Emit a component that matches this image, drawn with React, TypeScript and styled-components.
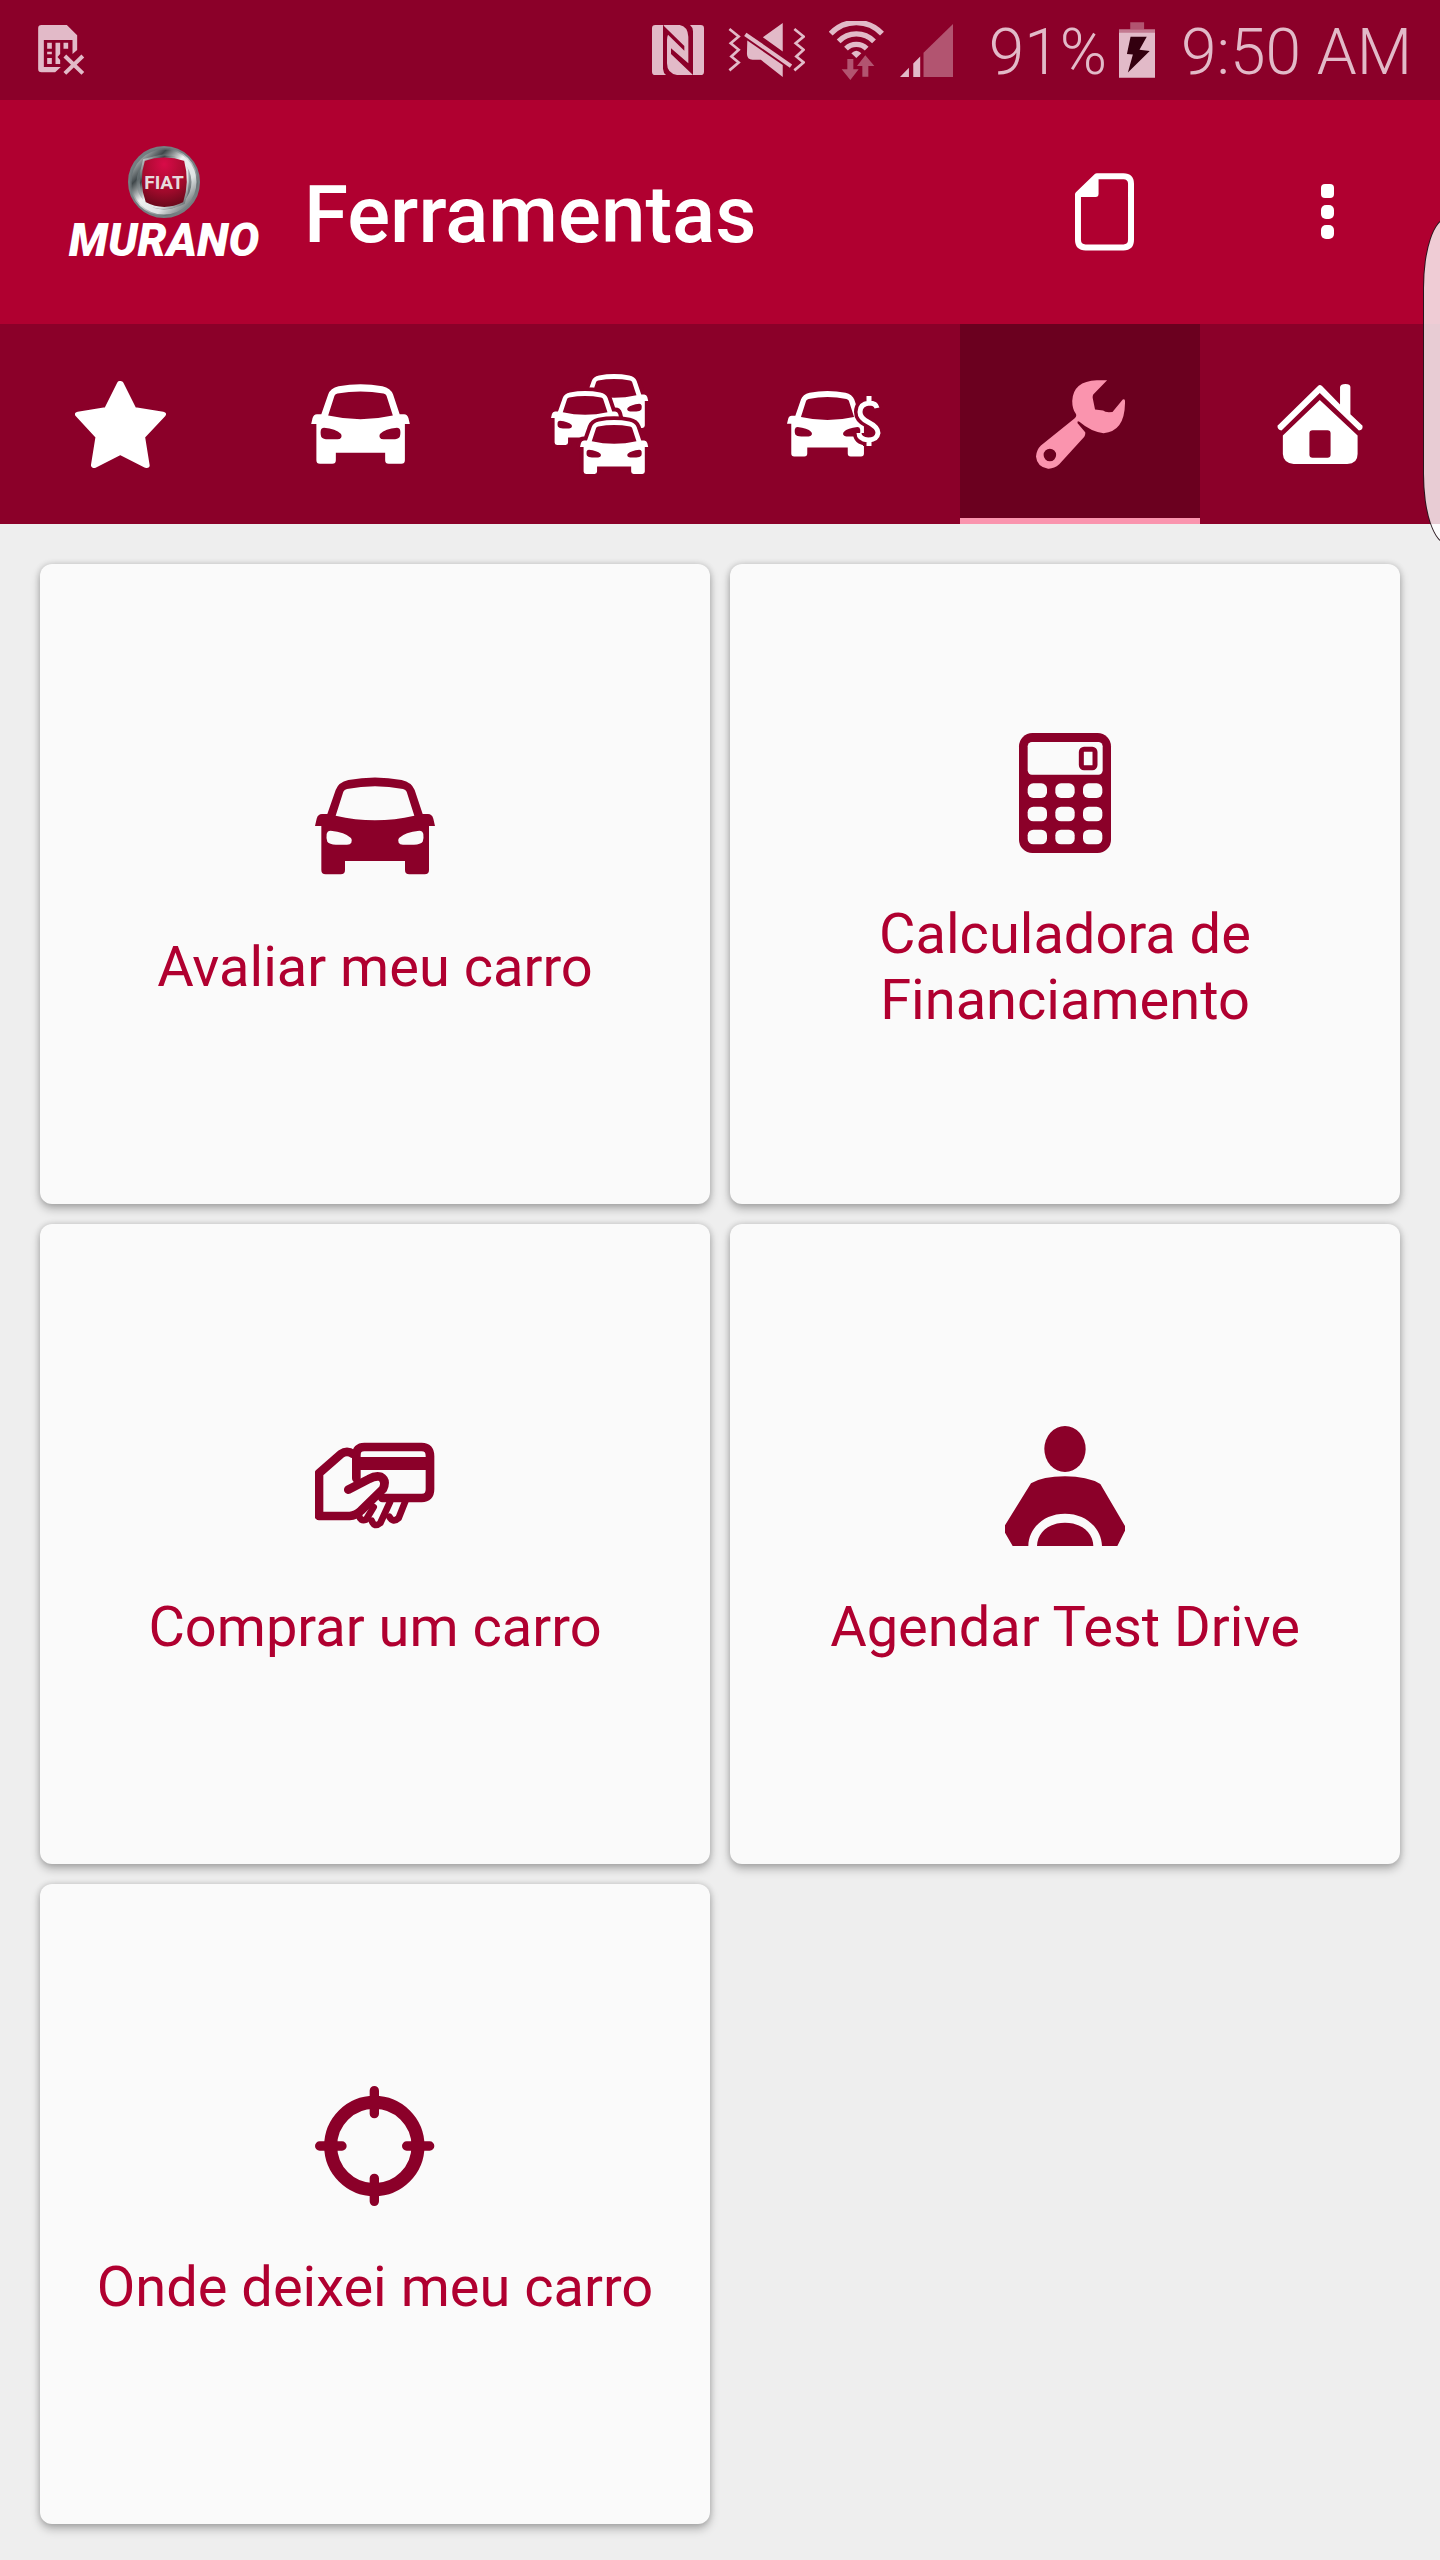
import React from "react";
import styled, { createGlobalStyle } from "styled-components";

const color = {
  dark: "#8b0029",
  darker: "#6b001f",
  primary: "#b00030",
  accent: "#fa94ae",
  page: "#eeeeee",
  card: "#fafafa",
  status: "#e2bac8",
};

const GlobalStyle = createGlobalStyle`
  * { box-sizing: border-box; }
  body { margin: 0; background: ${color.page}; font-family: Roboto, "Noto Sans", sans-serif; }
  button { font: inherit; border: 0; padding: 0; margin: 0; background: none; cursor: pointer; }
  svg { display: block; flex: none; }
`;

const Screen = styled.div`
  position: relative;
  min-height: 100vh;
  overflow: hidden;
  background: ${color.page};
`;

const StatusBar = styled.div`
  display: flex;
  align-items: center;
  justify-content: space-between;
  height: 100px;
  padding: 0 28px 0 38px;
  background: ${color.dark};
  color: ${color.status};
  font-size: 64px;
  font-weight: 350;
  line-height: 100px;
  white-space: nowrap;
`;

const StatusGroup = styled.div<{ $gap: number }>`
  display: flex;
  align-items: center;
  gap: ${(p) => p.$gap}px;
`;

const StatusText = styled.span`
  padding-top: 6px;
`;

const AppBar = styled.header`
  display: flex;
  align-items: center;
  height: 224px;
  padding: 0 48px 0 68px;
  background: ${color.primary};
  color: #fff;
`;

const Brand = styled.div`
  display: flex;
  flex-direction: column;
  align-items: center;
  gap: 2px;
  width: 192px;
  padding-bottom: 18px;
`;

const BrandName = styled.span`
  font-size: 46px;
  font-weight: 900;
  font-style: italic;
  line-height: 40px;
`;

const Title = styled.h1`
  flex: 1;
  margin: 0;
  padding: 6px 0 0 44px;
  font-size: 80px;
  font-weight: 500;
  line-height: 96px;
`;

const Actions = styled.div`
  display: flex;
  gap: 80px;
`;

const IconButton = styled.button<{ $width: number }>`
  display: flex;
  align-items: center;
  justify-content: center;
  width: ${(p) => p.$width}px;
  height: 128px;
  color: #fff;
`;

const Tabs = styled.nav`
  display: flex;
  height: 200px;
  background: ${color.dark};
`;

const Tab = styled.button<{ $active?: boolean }>`
  flex: 1;
  display: flex;
  align-items: center;
  justify-content: center;
  color: ${(p) => (p.$active ? color.accent : "#fff")};
  background: ${(p) => (p.$active ? color.darker : "transparent")};
  box-shadow: ${(p) => (p.$active ? `inset 0 -6px 0 ${color.accent}` : "none")};
`;

const Grid = styled.main`
  display: grid;
  grid-template-columns: 1fr 1fr;
  gap: 20px;
  padding: 40px 40px 36px;
`;

const Card = styled.button`
  display: flex;
  flex-direction: column;
  align-items: center;
  justify-content: center;
  gap: 48px;
  min-height: 640px;
  padding: 0 40px 2px;
  border-radius: 12px;
  background: ${color.card};
  box-shadow: 0 5px 10px rgba(0, 0, 0, 0.26), 0 0 6px rgba(0, 0, 0, 0.16);
  color: ${color.dark};
`;

const CardLabel = styled.span`
  color: ${color.primary};
  font-size: 56px;
  line-height: 66px;
  text-align: center;
`;

const EdgeHandle = styled.div`
  position: absolute;
  top: 218px;
  right: -31px;
  width: 48px;
  height: 326px;
  border: 1px solid rgba(20, 0, 8, 0.9);
  border-radius: 24px / 70px;
  background: rgba(255, 255, 255, 0.8);
`;

type IconProps = {
  box: string;
  w: number;
  h: number;
  stretch?: boolean;
  children: React.ReactNode;
};

function Icon({ box, w, h, stretch, children }: IconProps) {
  return (
    <svg
      width={w}
      height={h}
      viewBox={box}
      fill="currentColor"
      preserveAspectRatio={stretch ? "none" : undefined}
      aria-hidden="true"
    >
      {children}
    </svg>
  );
}

const carBody =
  "M75 228L80 206Q84 192 96 192H112L137 120Q145 97 175 90Q255 75 335 90Q365 97 374 120L398 192H414Q426 192 430 206L435 228H417V360Q417 373 404 373H358Q345 373 345 360V333H165V360Q165 373 152 373H107Q94 373 94 360V228Z";
const carHoles =
  "M137 197L160 125Q163 119 171 117Q255 101 339 117Q347 119 350 125L373 197Q255 224 137 197ZM110 252Q112 242 122 242Q165 246 183 264Q188 271 184 278Q181 284 171 284H138Q118 283 112 275Q108 265 110 252ZM400 252Q398 242 388 242Q345 246 327 264Q322 271 326 278Q329 284 339 284H372Q392 283 398 275Q402 265 400 252Z";

const CarShape = () => <path fillRule="evenodd" d={carBody + carHoles} />;

/* A small car that cuts a gap out of whatever lies behind it. */
const LayeredCar = ({ x, y }: { x: number; y: number }) => (
  <g transform={`translate(${x} ${y}) scale(.1895 .1855) translate(-75 -82)`}>
    <path d={carBody} fill={color.dark} stroke={color.dark} strokeWidth="42" strokeLinejoin="round" />
    <CarShape />
  </g>
);

const SimIcon = () => (
  <Icon box="114 75 140 150" w={47} h={50}>
    <path d="M114 85Q114 75 124 75H200L231 106V150L217 162V120H131V201H182L165 217H124Q114 217 114 207Z" />
    <path d="M141 128h14v18h-14zM190 128h14v18h-14zM166 128h14v34l-8 9 8 9v12h-14zM141 155h14v8h-14zM141 174h14v18h-14z" />
    <path d="M194 168L248 220M248 168L194 220" stroke="currentColor" strokeWidth="12" />
  </Icon>
);

const NfcIcon = () => (
  <Icon box="63 75 156 150" w={52} h={50}>
    <path d="M73 75H96V206Q97 219 105 225H73Q63 225 63 215V85Q63 75 73 75Z" />
    <path d="M209 225H186V94Q185 81 177 75H209Q219 75 219 85V215Q219 225 209 225Z" />
    <path d="M98 77L160 138V152L111 104Q108 110 108 120V190Q108 220 138 225H186L120 162V145L172 190V110Q170 79 146 75H98Z" />
  </Icon>
);

const MuteIcon = () => (
  <Icon box="288 69 232 163" w={77} h={54}>
    <path d="M453 69V155L393 112ZM346 122L453 196V232L387 180H362Q345 180 345 162Z" />
    <path d="M340 103L478 199" stroke="currentColor" strokeWidth="12" />
    <path
      d="M292 87L320 110 296 130 320 150 298 170 320 188 292 212M488 87L516 110 492 130 516 150 494 170 516 188 488 212"
      fill="none"
      stroke="currentColor"
      strokeWidth="8"
    />
  </Icon>
);

const WifiIcon = () => (
  <Icon box="597 60 165 177" w={55} h={59}>
    <g fill="none" stroke="currentColor" strokeWidth="16">
      <path d="M602 98A105 105 0 0 1 756 98" />
      <path d="M626 121A74 74 0 0 1 732 121" />
      <path d="M648 143A44 44 0 0 1 710 143" />
    </g>
    <path d="M664 157Q679 142 694 157L679 171Z" />
    <path opacity=".45" d="M652 174H670V205H686L661 237L635 205H652ZM697 227V195H681L706 163L733 195H715V227Z" />
  </Icon>
);

const SignalIcon = () => (
  <Icon box="806 71 160 160" w={53} h={53}>
    <path d="M806 231L833 203V231ZM846 231V190L867 169V231Z" />
    <path opacity=".45" d="M877 158L966 71V231H877Z" />
  </Icon>
);

const BatteryIcon = () => (
  <Icon box="233 63 109 168" w={36} h={56}>
    <path opacity=".45" d="M267 63h42v21h-42z" />
    <path opacity=".65" d="M233 84h109v12H233z" />
    <path d="M233 95h109v136H233z" />
    <path fill="#33000f" d="M268 107H317L295 146L326 150L260 215L275 161L257 159Z" />
  </Icon>
);

const Emblem = () => (
  <svg width="72" height="72" viewBox="0 0 72 72" aria-hidden="true">
    <defs>
      <linearGradient id="chrome" x1="0" y1="0" x2="1" y2="1">
        <stop offset="0" stopColor="#8f9a9d" />
        <stop offset=".3" stopColor="#5f686b" />
        <stop offset=".5" stopColor="#d5dadb" />
        <stop offset=".75" stopColor="#697275" />
        <stop offset="1" stopColor="#a3adb0" />
      </linearGradient>
      <linearGradient id="rim" x1="0" y1="0" x2="1" y2="1">
        <stop offset="0" stopColor="#e8ecec" />
        <stop offset=".25" stopColor="#40484b" />
        <stop offset=".45" stopColor="#eef0f0" />
        <stop offset=".7" stopColor="#dfe3e4" />
        <stop offset="1" stopColor="#4a5255" />
      </linearGradient>
      <radialGradient id="shield" cx=".5" cy=".15" r=".9">
        <stop offset="0" stopColor="#d80b48" />
        <stop offset=".6" stopColor="#9f0a2b" />
        <stop offset="1" stopColor="#5e0818" />
      </radialGradient>
    </defs>
    <circle cx="36" cy="36" r="35" fill="url(#chrome)" stroke="#757e81" strokeWidth="2" />
    <circle cx="36" cy="36" r="30" fill="none" stroke="url(#rim)" strokeWidth="5" />
    <path
      d="M16 14Q36 7 57 14Q63 36 56 57Q36 67 17 57Q9 36 16 14Z"
      fill="url(#shield)"
      stroke="url(#rim)"
      strokeWidth="2"
    />
    <text
      x="36"
      y="43"
      textAnchor="middle"
      fill="#e6dadd"
      fontFamily="Roboto, sans-serif"
      fontSize="19"
      fontWeight="700"
    >
      FIAT
    </text>
  </svg>
);

const FileIcon = () => (
  <Icon box="102 518 178 234" w={59} h={78}>
    <path
      d="M168 527H248Q271 527 271 550V719Q271 742 248 742H134Q111 742 111 719V582Z"
      fill="none"
      stroke="currentColor"
      strokeWidth="18"
      strokeLinejoin="round"
    />
    <path d="M108 582L168 524H173V581Q173 590 164 590H108Z" />
  </Icon>
);

const MoreIcon = () => (
  <Icon box="0 0 14 56" w={14} h={56}>
    <rect y="0" width="13" height="14" rx="4" />
    <rect y="21" width="13" height="14" rx="5" />
    <rect y="41" width="13" height="14" rx="5" />
  </Icon>
);

const StarIcon = () => (
  <Icon box="82 123 217 261" w={91} h={87} stretch>
    <path
      d="M190 131L221 209L291 223L241 290L252 376L190 336L128 376L139 290L90 223L159 209Z"
      stroke="currentColor"
      strokeWidth="16"
      strokeLinejoin="round"
    />
  </Icon>
);

const CarIcon = () => (
  <Icon box="75 82 360 292" w={99} h={80}>
    <CarShape />
  </Icon>
);

const CarsIcon = () => (
  <Icon box="0 0 98 100" w={98} h={100}>
    <LayeredCar x={29} y={0} />
    <LayeredCar x={0} y={17} />
    <LayeredCar x={29} y={46} />
  </Icon>
);

const CarPriceIcon = () => (
  <Icon box="0 0 106 66" w={106} h={66}>
    <g transform="scale(.225) translate(-75 -82)">
      <CarShape />
    </g>
    <g fill="none" strokeLinejoin="round">
      {[
        { stroke: color.dark, strokeWidth: 12 },
        { stroke: "currentColor", strokeWidth: 5 },
      ].map((line) => (
        <path
          key={line.strokeWidth}
          {...line}
          d="M90 17Q89 12 82 12Q73 13 73 21Q73 27 81 31Q91 36 91 42Q90 49 81 49Q72 48 72 42M82 5V12M82 49V55"
        />
      ))}
    </g>
  </Icon>
);

const WrenchIcon = () => (
  <Icon box="661 120 199 268" w={89} h={89} stretch>
    <path
      fillRule="evenodd"
      d="M820 121L789 164Q787 169 788 176L793 209L811 212Q815 217 824 217L832 216L855 179Q860 176 860 183Q861 275 812 280Q785 277 758 246Q753 241 754 250L771 277Q772 284 769 291L713 374Q701 388 688 387Q663 381 661 350Q662 330 672 317L747 236Q753 229 750 222Q742 207 742 183Q744 124 797 121ZM692 327A14 19 0 1 0 692 365A14 19 0 1 0 692 327Z"
    />
  </Icon>
);

const HouseIcon = () => (
  <Icon box="1201 131 191 241" w={86} h={80} stretch>
    <path d="M1202 257L1292 137Q1296 131 1301 137L1341 193V140Q1342 131 1353 131Q1364 131 1364 140V222L1391 257Q1392 271 1383 271L1296 158L1211 271Q1202 270 1202 257Z" />
    <path
      fillRule="evenodd"
      d="M1296 179L1380 286V342Q1380 372 1357 372H1238Q1215 369 1214 342V286ZM1280 270Q1273 270 1273 279V344Q1273 353 1280 353H1313Q1320 353 1320 344V279Q1320 270 1313 270Z"
    />
  </Icon>
);

const CardCarIcon = () => (
  <Icon box="75 48 360 360" w={120} h={120}>
    <CarShape />
  </Icon>
);

const CalculatorIcon = () => (
  <Icon box="75 69 360 360" w={120} h={120}>
    <rect x="117" y="69" width="276" height="360" rx="40" />
    <g fill={color.card}>
      <rect x="143" y="96" width="225" height="98" rx="13" />
      {[220, 290, 359].map((y) =>
        [143, 226, 309].map((x) => <rect key={`${x}-${y}`} x={x} y={y} width="58" height="44" rx="17" />)
      )}
    </g>
    <rect x="304" y="118" width="41" height="55" rx="8" fill="none" stroke="currentColor" strokeWidth="15" />
  </Icon>
);

const HandCardIcon = () => (
  <Icon box="74 48 360 360" w={120} h={120}>
    <g fill="none" stroke="currentColor" strokeWidth="26" strokeLinecap="round" strokeLinejoin="round">
      <path d="M198 205V136Q198 111 222 111H394Q419 111 419 138V238Q419 264 394 264H276" />
      <path d="M188 132Q170 119 152 132L86 190V318H178Q196 317 212 302L278 237Q290 211 270 200Q255 196 236 207L174 239" />
      <path d="M206 316Q210 335 227 329L250 291" strokeWidth="20" />
      <path d="M244 332Q252 354 270 339L299 276" strokeWidth="20" />
      <path d="M297 320Q308 340 325 324L345 274" strokeWidth="20" />
    </g>
    <path d="M190 141h235v39H190z" />
  </Icon>
);

const DriverIcon = () => (
  <Icon box="75 78 360 360" w={120} h={120}>
    <ellipse cx="255" cy="147" rx="62" ry="69" />
    <path d="M153 250Q188 229 255 229Q322 229 361 252L435 378V392L412 438H366C364 384 318 341 255 341S146 384 145 438H98L75 398V376Z" />
    <path d="M171 438C172 398 206 368 255 368S339 398 340 438Z" />
  </Icon>
);

const TargetIcon = () => (
  <Icon box="74 78 360 360" w={120} h={120}>
    <circle cx="252" cy="258" r="131" fill="none" stroke="currentColor" strokeWidth="39" />
    <path
      d="M252 92V161M252 355V424M88 258H155M349 258H418"
      stroke="currentColor"
      strokeWidth="28"
      strokeLinecap="round"
    />
  </Icon>
);

const tabs = [
  { name: "Favoritos", icon: <StarIcon /> },
  { name: "Carro", icon: <CarIcon /> },
  { name: "Carros", icon: <CarsIcon /> },
  { name: "Ofertas", icon: <CarPriceIcon /> },
  { name: "Ferramentas", icon: <WrenchIcon />, active: true },
  { name: "Loja", icon: <HouseIcon /> },
];

const tools = [
  { label: "Avaliar meu carro", icon: <CardCarIcon /> },
  { label: "Calculadora de Financiamento", icon: <CalculatorIcon /> },
  { label: "Comprar um carro", icon: <HandCardIcon /> },
  { label: "Agendar Test Drive", icon: <DriverIcon /> },
  { label: "Onde deixei meu carro", icon: <TargetIcon /> },
];

export default function App() {
  return (
    <Screen>
      <GlobalStyle />
      <StatusBar>
        <SimIcon />
        <StatusGroup $gap={36}>
          <StatusGroup $gap={24}>
            <NfcIcon />
            <MuteIcon />
            <StatusGroup $gap={16}>
              <WifiIcon />
              <SignalIcon />
            </StatusGroup>
          </StatusGroup>
          <StatusGroup $gap={26}>
            <StatusGroup $gap={12}>
              <StatusText>91%</StatusText>
              <BatteryIcon />
            </StatusGroup>
            <StatusText>9:50 AM</StatusText>
          </StatusGroup>
        </StatusGroup>
      </StatusBar>
      <AppBar>
        <Brand>
          <Emblem />
          <BrandName>MURANO</BrandName>
        </Brand>
        <Title>Ferramentas</Title>
        <Actions>
          <IconButton $width={160} aria-label="Documento">
            <FileIcon />
          </IconButton>
          <IconButton $width={128} aria-label="Mais opções">
            <MoreIcon />
          </IconButton>
        </Actions>
      </AppBar>
      <Tabs>
        {tabs.map((t) => (
          <Tab key={t.name} $active={t.active} aria-label={t.name} aria-current={t.active ? "page" : undefined}>
            {t.icon}
          </Tab>
        ))}
      </Tabs>
      <Grid>
        {tools.map((t) => (
          <Card key={t.label}>
            {t.icon}
            <CardLabel>{t.label}</CardLabel>
          </Card>
        ))}
      </Grid>
      <EdgeHandle />
    </Screen>
  );
}
